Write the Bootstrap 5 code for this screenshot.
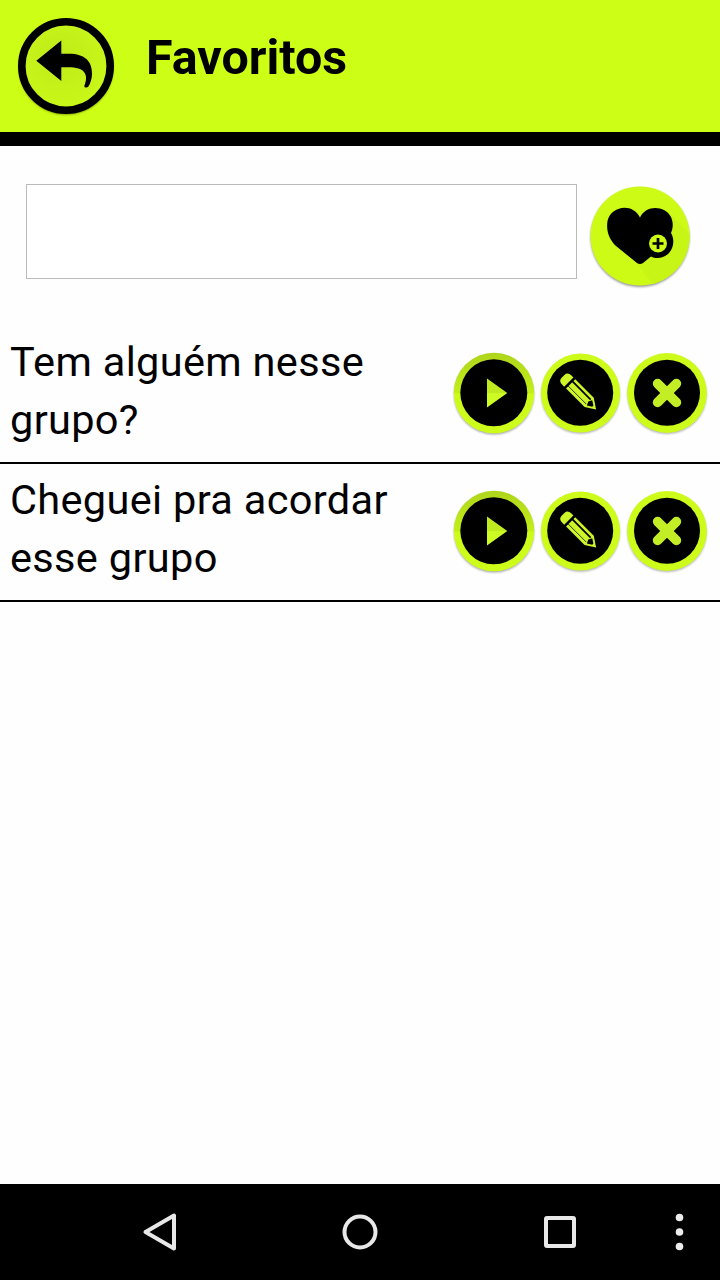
<!DOCTYPE html>
<html lang="pt-BR">
<head>
<meta charset="utf-8">
<meta name="viewport" content="width=device-width, initial-scale=1">
<title>Favoritos</title>
<link rel="stylesheet" href="https://cdn.jsdelivr.net/npm/bootstrap@5.3.0/dist/css/bootstrap.min.css">
<style>
  body { font-family: Roboto, sans-serif; color: #000; background: #fefefe; }
  .app-header { height: 146px; background: #cdff16; border-bottom: 14px solid #000; }
  .app-title { font-size: 48.4px; line-height: 56px; font-weight: 700; margin: 30px 0 0 23px; }
  .entry-bar { height: 180px; padding: 38px 26px 0; }
  .entry-field { width: 551px; height: 95px; border: 1px solid #bbb; font-size: 40px; background: #fff; }
  .add-btn { margin-left: 9px; }
  .fav-item { height: 138px; padding: 0 10px; border-bottom: 2px solid #000; }
  .fav-text { width: 410px; font-size: 41.5px; line-height: 58px; letter-spacing: .33px; padding-top: 7px; }
  .fav-actions { padding-top: 23px; }
  .nav-keys { height: 96px; background: #000; }
  .plain-btn { border: 0; padding: 0; background: none; }
  svg { display: block; }
</style>
</head>
<body>
<svg width="0" height="0" class="position-absolute" aria-hidden="true">
  <defs>
    <linearGradient id="rim" x1="0" y1="0" x2="0" y2="1">
      <stop offset="0" stop-color="#afd51c"/><stop offset=".5" stop-color="#c2ef18"/>
      <stop offset=".51" stop-color="#cdfb1a"/><stop offset="1" stop-color="#cdfb1a"/>
    </linearGradient>
    <linearGradient id="arrowFill" x1="0" y1="0" x2="0" y2="1">
      <stop offset=".5" stop-color="#c0ea20"/><stop offset=".52" stop-color="#cdfb24"/>
    </linearGradient>
    <radialGradient id="disc" cx=".45" cy=".4" r=".55">
      <stop offset="0" stop-color="#bfea1a"/><stop offset="1" stop-color="#c9f718"/>
    </radialGradient>
    <filter id="soft" x="-20%" y="-20%" width="140%" height="140%"><feGaussianBlur stdDeviation="1.3"/></filter>
    <symbol id="play" viewBox="0 0 86 90">
      <circle cx="43" cy="45.500" r="40" fill="#000" opacity=".35" filter="url(#soft)"/>
      <circle cx="43" cy="44" r="40.3" fill="url(#rim)"/>
      <circle cx="42.8" cy="43.7" r="33.5"/>
      <path d="M36 29.5 56.3 44 36 58.5Z" fill="url(#arrowFill)"/>
    </symbol>
    <symbol id="pencil" viewBox="0 0 86 90">
      <circle cx="43" cy="45.500" r="39.3" fill="#000" opacity=".3" filter="url(#soft)"/>
      <circle cx="43" cy="44" r="39.6" fill="#cdfb1a"/>
      <circle cx="42.700" cy="43.7" r="33"/>
      <g transform="translate(25.500 27.300) rotate(45)" fill="#cdf52a">
        <path d="M5.5-6.5H8.2V6.500H5.5Q0 6.500 0 2V-2Q0-6.500 5.5-6.500Z"/>
        <path d="M10.800-6.500H37L46.800 0 37 6.500H10.800Z"/>
        <path d="M10-3.100H36" stroke="#000" stroke-width="1.700"/>
        <path d="M10 3.200H36" stroke="#000" stroke-width=".7"/>
        <path d="M37.500-3.800 42.200-.8V.8L37.500 3.800 35.800 0Z" fill="#000"/>
      </g>
    </symbol>
    <symbol id="remove" viewBox="0 0 86 90">
      <circle cx="43" cy="45.500" r="39.6" fill="#000" opacity=".3" filter="url(#soft)"/>
      <circle cx="43" cy="44" r="39.9" fill="#cdfb1a"/>
      <circle cx="43" cy="43.7" r="33"/>
      <path d="M33.600 34.600 52.400 53.400M52.400 34.600 33.600 53.400" stroke="#c3ee25" stroke-width="9.600" stroke-linecap="round"/>
    </symbol>
  </defs>
</svg>

<div class="d-flex flex-column vh-100">
  <header class="app-header d-flex align-items-start">
    <button class="plain-btn ms-3 mt-3" aria-label="Voltar">
      <svg width="107" height="104" viewBox="16 16 107 104">
        <circle cx="66" cy="67.5" r="47" fill="#475900" opacity=".75" filter="url(#soft)"/>
        <circle cx="66" cy="66" r="44.2" fill="url(#disc)" stroke="#000" stroke-width="7.6"/>
        <path d="M36.3 60.8 61.3 40.5V53.8H69C85 53.8 92 61.5 92 73.5C92 79 90.3 83.8 88.2 86.8C87 88 84.3 87.7 84.3 86C86 82 86.8 77 85 73.5C82.2 68.5 76 67.3 68 67.3H61.3V81Z"/>
      </svg>
    </button>
    <h1 class="app-title">Favoritos</h1>
  </header>

  <main class="flex-grow-1">
    <div class="entry-bar d-flex align-items-start">
      <input type="text" class="entry-field form-control rounded-0 flex-shrink-0" aria-label="Nova frase">
      <button class="plain-btn add-btn flex-shrink-0" aria-label="Adicionar aos favoritos">
        <svg width="108" height="108" viewBox="586 184 108 108">
          <defs><clipPath id="round"><circle cx="640" cy="236" r="49.600"/></clipPath></defs>
          <circle cx="640" cy="237.500" r="49.400" fill="#000" opacity=".4" filter="url(#soft)"/>
          <circle cx="640" cy="236" r="49.600" fill="#cdfb16"/>
          <path clip-path="url(#round)" d="M668 212 710 254V320H680L636 262Z" fill="#c7f515"/>
          <path d="M640 217.500C646 204.500 665 205.500 671 217C674 224 672.5 229 671 233C675 240 673.5 248 669 253C664 258 657 259.5 651 256.5L643 263Q640 265 637 263L616 246C609 239 606 231 607.5 221C611 205.500 633 202.500 640 217.500Z"/>
          <circle cx="658" cy="243.5" r="9" fill="#cdfb16"/>
          <path d="M658 238V249M652.5 243.5H663.5" stroke="#000" stroke-width="2.700"/>
        </svg>
      </button>
    </div>

    <div class="fav-item d-flex justify-content-between align-items-start">
      <div class="fav-text">Tem alguém nesse<br>grupo?</div>
      <div class="fav-actions d-flex">
        <button class="plain-btn" aria-label="Ouvir"><svg width="86" height="90"><use href="#play"/></svg></button>
        <button class="plain-btn" aria-label="Editar"><svg width="87" height="90"><use href="#pencil"/></svg></button>
        <button class="plain-btn" aria-label="Excluir"><svg width="86" height="90"><use href="#remove"/></svg></button>
      </div>
    </div>
    <div class="fav-item d-flex justify-content-between align-items-start">
      <div class="fav-text">Cheguei pra acordar<br>esse grupo</div>
      <div class="fav-actions d-flex">
        <button class="plain-btn" aria-label="Ouvir"><svg width="86" height="90"><use href="#play"/></svg></button>
        <button class="plain-btn" aria-label="Editar"><svg width="87" height="90"><use href="#pencil"/></svg></button>
        <button class="plain-btn" aria-label="Excluir"><svg width="86" height="90"><use href="#remove"/></svg></button>
      </div>
    </div>
  </main>

  <footer class="nav-keys">
    <svg width="720" height="96" fill="none" stroke="#e8e8e8" stroke-width="4" stroke-linejoin="round">
      <path d="M145.5 48 174 31.5V64.5Z"/>
      <circle cx="360" cy="48" r="15.5"/>
      <rect x="546" y="34" width="28" height="28" rx="1"/>
      <g fill="#ececec" stroke="none"><circle cx="679.5" cy="33.5" r="3.8"/><circle cx="679.5" cy="48" r="3.8"/><circle cx="679.5" cy="62.5" r="3.8"/></g>
    </svg>
  </footer>
</div>
<script src="https://cdn.jsdelivr.net/npm/bootstrap@5.3.0/dist/js/bootstrap.bundle.min.js"></script>
</body>
</html>
